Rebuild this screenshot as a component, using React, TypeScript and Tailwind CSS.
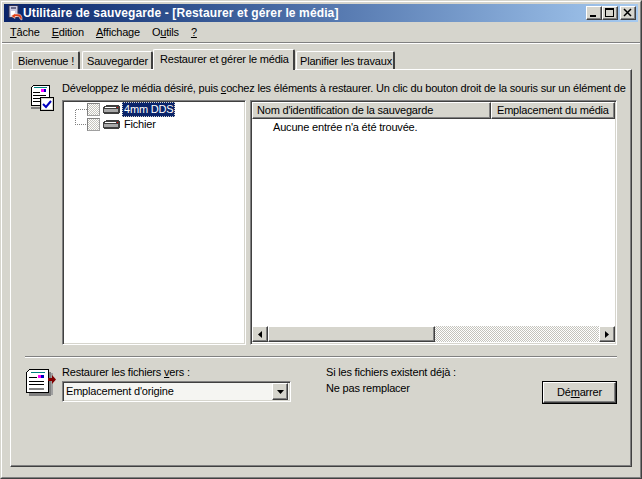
import type {ReactNode} from "react";

const raised =
  "border border-t-white border-l-white border-r-[#404040] border-b-[#404040] shadow-[inset_-1px_-1px_0_#808080,inset_1px_1px_0_#d6d5cd]";
const sunken =
  "border border-t-[#808080] border-l-[#808080] border-r-white border-b-white shadow-[inset_1px_1px_0_#404040,inset_-1px_-1px_0_#d6d5cd]";
const dither =
  "bg-[repeating-conic-gradient(#c4c3bc_0_25%,#ffffff_0_50%)] bg-[length:2px_2px]";

function Key({children}: {children: ReactNode}) {
  return <span className="underline underline-offset-[1px]">{children}</span>;
}

function AppIcon() {
  return (
    <svg width="16" height="16" viewBox="0 0 16 16" className="shrink-0">
      <rect x="2" y="0.5" width="9" height="12" fill="#c8c8e0" stroke="#303050" />
      <rect x="4" y="2" width="5" height="2" fill="#6a6a8a" />
      <rect x="4" y="6" width="4" height="5" fill="#ffffff" />
      <path d="M8 8.5 L4 11 L8 13.5 V11.5 H11 Q13 11.5 13 14 L15 15 Q15.5 9 11 9 H8 Z" fill="#e04018" stroke="#ffffff" strokeWidth="0.5" />
    </svg>
  );
}

function CaptionButton({children}: {children: ReactNode}) {
  return (
    <div className={`w-4 h-[14px] bg-[#d6d5cd] ${raised} flex items-center justify-center`}>
      <svg width="10" height="10" viewBox="0 0 10 10" shapeRendering="crispEdges">
        {children}
      </svg>
    </div>
  );
}

function Tab({label, active, className}: {label: string; active?: boolean; className: string}) {
  if (active) {
    return (
      <div className={`relative z-10 h-[21px] -mb-px bg-[#d6d5cd] border-t border-l border-white border-r-2 border-r-[#404040] rounded-t-[2px] pl-[6px] whitespace-nowrap ${className}`}>
        <span className="leading-[19px] block">{label}</span>
      </div>
    );
  }
  return (
    <div className={`h-[18px] bg-[#d6d5cd] border-t border-l border-white border-r-2 border-r-[#404040] rounded-t-[2px] whitespace-nowrap ${className}`}>
      <span className="leading-[19px] block">{label}</span>
    </div>
  );
}

function RestoreIcon() {
  return (
    <svg width="24" height="27" viewBox="2 0 24 27" className="shrink-0" shapeRendering="crispEdges">
      <path d="M5 1 H21 V21 H3 V3 Z" fill="#ffffff" stroke="#000000" transform="translate(0.5 0.5)" />
      <rect x="3" y="23" width="15" height="2" fill="#808080" />
      <rect x="6" y="3" width="13" height="1" fill="#008080" />
      <rect x="13" y="5" width="3" height="3" fill="#ff00ff" />
      <rect x="16" y="5" width="2" height="3" fill="#0000c0" />
      <rect x="5" y="8" width="7" height="1" fill="#000000" />
      <rect x="5" y="11" width="13" height="1" fill="#000000" />
      <rect x="5" y="14" width="10" height="1" fill="#000000" />
      <rect x="5" y="17" width="8" height="1" fill="#000000" />
      <rect x="12.5" y="13.5" width="13" height="13" fill="#d6d5cd" stroke="#000000" />
      <rect x="14" y="15" width="10" height="10" fill="#ffffff" />
      <path d="M15 20 L18 23 L23 17" fill="none" stroke="#0000c0" strokeWidth="2" shapeRendering="auto" />
    </svg>
  );
}

function RestoreToIcon() {
  return (
    <svg width="32" height="28" viewBox="0 0 32 28" className="shrink-0" shapeRendering="crispEdges">
      <rect x="3" y="3" width="22" height="24" fill="#808080" />
      <rect x="25" y="4" width="2" height="22" fill="#a0a0a0" />
      <path d="M3.5 0.5 H22.5 V23.5 H0.5 V3.5 Z" fill="#ffffff" stroke="#000000" />
      <rect x="5" y="3" width="14" height="1" fill="#008080" />
      <rect x="12" y="6" width="3" height="3" fill="#ff00ff" />
      <rect x="15" y="6" width="3" height="3" fill="#0000c0" />
      <rect x="3" y="8" width="8" height="1" fill="#000000" />
      <rect x="3" y="12" width="15" height="1" fill="#000000" />
      <rect x="3" y="15" width="15" height="1" fill="#000000" />
      <rect x="3" y="19" width="15" height="2" fill="#808080" />
      <path d="M22 9 H26 V6 L30 10.500 L26 15 V12 H22 Z" fill="#800000" shapeRendering="auto" />
    </svg>
  );
}

function TreeRow({label, selected}: {label: string; selected?: boolean}) {
  return (
    <div className="flex items-center h-[15px]">
      <div className={`w-[13px] h-[13px] shrink-0 border border-t-[#808080] border-l-[#808080] border-r-[#a0a0a0] border-b-[#a0a0a0] ${dither}`} />
      <svg width="17" height="9" viewBox="0 0 17 9" className="ml-[3px] mr-[1px] shrink-0" shapeRendering="crispEdges">
        <path d="M3 0 H16 V1 H17 V8 H16 V9 H1 V8 H0 V2 H1 V1 H3 Z" fill="#404040" />
        <rect x="2" y="2" width="11" height="1" fill="#ffffff" />
        <rect x="1" y="4" width="14" height="3" fill="#a8a8a8" />
        <rect x="14" y="2" width="1" height="1" fill="#e00000" />
      </svg>
      <span
        className={`ml-[1px] px-[2px] h-[15px] leading-[14px] ${
          selected ? "bg-[#0a246a] text-white outline outline-1 -outline-offset-1 outline-dotted outline-[#d6d5cd]" : ""
        }`}
      >
        {label}
      </span>
    </div>
  );
}

function ScrollArrow({dir}: {dir: "left" | "right"}) {
  return (
    <div className={`w-4 h-4 shrink-0 bg-[#d6d5cd] ${raised} flex items-center justify-center`}>
      <svg width="5" height="7" viewBox="0 0 5 7" shapeRendering="crispEdges">
        <path d={dir === "left" ? "M4 0 V7 L0 3.500 Z" : "M0 0 V7 L4 3.500 Z"} fill="#000000" shapeRendering="auto" />
      </svg>
    </div>
  );
}

export default function App() {
  return (
    <div className="w-[642px] h-[479px] overflow-hidden flex flex-col bg-[#d6d5cd] border border-t-[#d6d5cd] border-l-[#d6d5cd] border-r-[#404040] border-b-[#404040] text-[11px] tracking-[-0.19px] text-black font-['Liberation_Sans',Arial,sans-serif]">
      <div className="flex-1 min-h-0 flex flex-col border border-t-white border-l-white border-r-[#808080] border-b-[#808080] px-[2px] pt-[2px]">
        {/* Title bar */}
        <div className="h-[18px] shrink-0 flex items-center pl-[3px] pr-[2px] bg-gradient-to-r from-[#0a246a] to-[#a6caf0]">
          <AppIcon />
          <span className="text-white font-bold text-[12px] tracking-[0.12px] whitespace-nowrap">
            Utilitaire de sauvegarde - [Restaurer et gérer le média]
          </span>
          <div className="ml-auto flex">
            <CaptionButton>
              <rect x="1" y="7" width="6" height="2" fill="#000" />
            </CaptionButton>
            <CaptionButton>
              <path d="M0.500 0.500 H8.500 V8.500 H0.500 Z M0 1.500 H9" fill="none" stroke="#000" />
            </CaptionButton>
            <div className="w-[2px]" />
            <CaptionButton>
              <path d="M1 1 L8 8 M8 1 L1 8" stroke="#000" strokeWidth="1.500" shapeRendering="auto" />
            </CaptionButton>
          </div>
        </div>

        {/* Menu */}
        <div className="h-[18px] shrink-0 flex items-center gap-[12px] pl-[6px] mt-px">
          <span><Key>T</Key>âche</span>
          <span><Key>E</Key>dition</span>
          <span><Key>A</Key>ffichage</span>
          <span>O<Key>u</Key>tils</span>
          <span><Key>?</Key></span>
        </div>
        <div className="h-[2px] shrink-0 -mx-[2px] mt-px border-t border-t-[#808080] border-b border-b-white" />

        {/* Tabs */}
        <div className="h-[25px] shrink-0 pl-[8px] flex items-end">
          <Tab label="Bienvenue !" className="w-[68px] mr-[2px] pl-[5px]" />
          <Tab label="Sauvegarder" className="w-[71px] pl-[4px]" />
          <Tab label="Restaurer et gérer le média" active className="w-[142px] mr-[1px]" />
          <Tab label="Planifier les travaux" className="w-[99px] pl-[3px]" />
        </div>

        {/* Tab page */}
        <div className="w-[622px] h-[398px] shrink-0 ml-[6px] border border-t-white border-l-white border-r-[#404040] border-b-[#404040] shadow-[inset_-1px_-1px_0_#808080] overflow-hidden flex flex-col">
          <div className="flex pt-[12px] pl-[19px]">
            <div className="w-[32px] pt-[2px]">
              <RestoreIcon />
            </div>
            <div className="min-w-0">
              <div className="h-[18px] leading-[12px] whitespace-nowrap">
                Développez le média désiré, puis <Key>c</Key>ochez les éléments à restaurer. Un clic du bouton droit de la souris sur un élément de
              </div>
              <div className="flex gap-[4px] h-[245px] w-[555px]">
                {/* Tree */}
                <div className={`relative w-[184px] shrink-0 bg-white ${sunken} pt-[1px] pl-[24px]`}>
                  <svg width="12" height="17" viewBox="0 0 12 17" className="absolute left-[12px] top-[8px]" shapeRendering="crispEdges">
                    <path d="M0.500 0.500 H12 M0.500 0.500 V15.500 H12" fill="none" stroke="#808080" strokeDasharray="1 1" />
                  </svg>
                  <TreeRow label="4mm DDS" selected />
                  <TreeRow label="Fichier" />
                </div>

                {/* List */}
                <div className={`relative flex-1 min-w-0 bg-white ${sunken} pt-[1px] px-[1px] pb-[2px] flex flex-col`}>
                  <div className="flex h-[17px] shrink-0 overflow-hidden">
                    <div className={`w-[239px] shrink-0 bg-[#d6d5cd] ${raised} pl-[4px] leading-[14px] whitespace-nowrap`}>
                      Nom d'identification de la sauvegarde
                    </div>
                    <div className={`flex-1 bg-[#d6d5cd] ${raised} pl-[5px] leading-[14px] whitespace-nowrap`}>
                      Emplacement du média
                    </div>
                  </div>
                  <div className="flex-1 pl-[21px] pt-[1px] leading-[14px]">Aucune entrée n'a été trouvée.</div>
                  <div className="flex h-4 shrink-0">
                    <ScrollArrow dir="left" />
                    <div className={`w-[167px] shrink-0 bg-[#d6d5cd] ${raised}`} />
                    <div className={`flex-1 ${dither}`} />
                    <ScrollArrow dir="right" />
                  </div>
                </div>
              </div>
            </div>
          </div>

          <div className="h-[2px] w-[592px] ml-[14px] mt-[11px] border-t border-t-[#808080] border-b border-b-white" />

          <div className="flex pl-[15px] pt-[9px]">
            <div className="w-[36px] pt-[2px]">
              <RestoreToIcon />
            </div>
            <div className="w-[264px]">
              <div className="h-[14px] leading-[11px]">
                Restaurer les fichiers <Key>v</Key>ers :
              </div>
              <div className={`w-[229px] h-[21px] ${sunken} bg-[#f5f5f2] flex items-center pl-[3px] pr-[2px]`}>
                <span>Emplacement d'origine</span>
                <div className={`ml-auto w-4 h-[17px] bg-[#d6d5cd] ${raised} flex items-center justify-center`}>
                  <svg width="7" height="4" viewBox="0 0 7 4">
                    <path d="M0 0 H7 L3.500 4 Z" fill="#000000" />
                  </svg>
                </div>
              </div>
            </div>
            <div className="w-[216px]">
              <div className="h-[16px] leading-[11px]">Si les fichiers existent déjà :</div>
              <div className="leading-[11px]">Ne pas remplacer</div>
            </div>
            <div className="border border-black mt-[14px] h-[23px] w-[75px]">
              <div className={`h-full bg-[#d6d5cd] ${raised} flex items-center justify-center`}>
                <span>Dé<Key>m</Key>arrer</span>
              </div>
            </div>
          </div>
        </div>
      </div>
    </div>
  );
}
